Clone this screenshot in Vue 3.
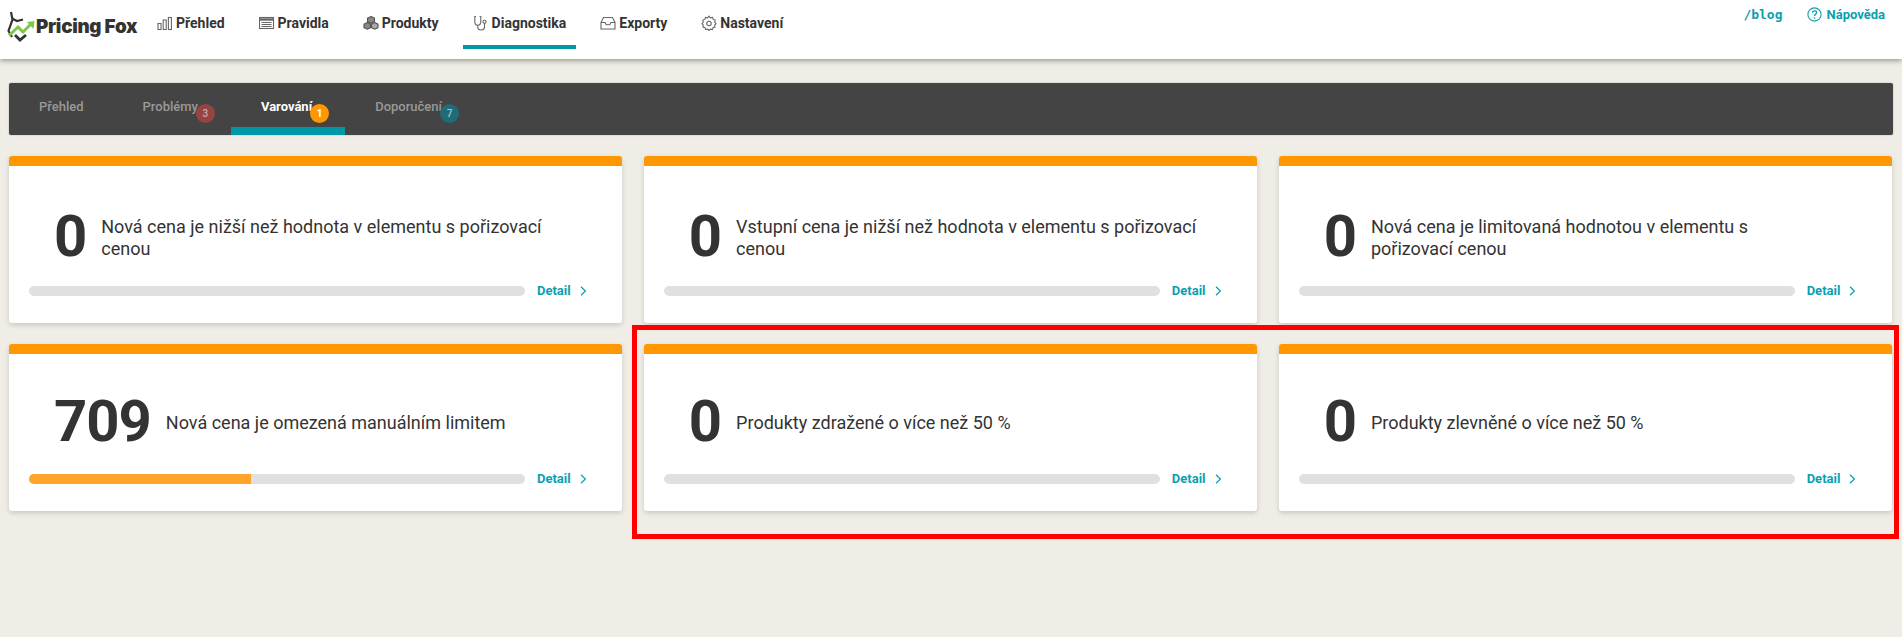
<script setup>
const navItems = [
  { label: "Přehled", icon: "bars" },
  { label: "Pravidla", icon: "table" },
  { label: "Produkty", icon: "cubes" },
  { label: "Diagnostika", icon: "stethoscope", active: true },
  { label: "Exporty", icon: "inbox" },
  { label: "Nastavení", icon: "gear" }
];

const tabs = [
  { label: "Přehled" },
  { label: "Problémy", badge: 3, tone: "red" },
  { label: "Varování", badge: 1, tone: "orange", active: true },
  { label: "Doporučení", badge: 7, tone: "teal" }
];

const cards = [
  { count: 0, text: "Nová cena je nižší než hodnota v elementu s pořizovací cenou", progress: 0, twoLine: true },
  { count: 0, text: "Vstupní cena je nižší než hodnota v elementu s pořizovací cenou", progress: 0, twoLine: true },
  { count: 0, text: "Nová cena je limitovaná hodnotou v elementu s pořizovací cenou", progress: 0, twoLine: true },
  { count: 709, text: "Nová cena je omezená manuálním limitem", progress: 44.7 },
  { count: 0, text: "Produkty zdražené o více než 50 %", progress: 0 },
  { count: 0, text: "Produkty zlevněné o více než 50 %", progress: 0 }
];
</script>

<template>
  <div class="page">
    <header class="topbar">
      <div class="logo">
        <svg class="logo-mark" width="29" height="31" viewBox="0 0 29 31" fill="none">
          <path d="M4 1 L5.5 8.5 L1.5 20 L5 26" stroke="#333" stroke-width="2.2" />
          <path d="M5 7.5 L10 10 L16 8.5" stroke="#333" stroke-width="2.2" />
          <path d="M8 24 L13 29 L19 24" stroke="#333" stroke-width="2.8" />
          <path d="M2 24.5 L11 16 L16 21 L24 13" stroke="#7ac943" stroke-width="3" />
          <path d="M20 11 L27.5 10 L26.5 18 Z" fill="#7ac943" />
        </svg>
        <span class="logo-text">Pricing Fox</span>
      </div>
      <nav class="nav">
        <a v-for="item in navItems" :key="item.label" class="nav-item" :class="[item.icon, { active: item.active }]">
          <svg class="nav-icon" width="16" height="16" viewBox="0 0 16 16" fill="none" stroke="#666" stroke-width="1.1">
            <template v-if="item.icon === 'bars'">
              <rect x="1" y="8.5" width="3" height="6" />
              <rect x="6.2" y="5" width="3" height="9.5" />
              <rect x="11.4" y="2.5" width="3" height="12" />
            </template>
            <template v-else-if="item.icon === 'table'">
              <rect x="0.5" y="2.5" width="14" height="11" />
              <path d="M0.5 4.5 H14.5" stroke-width="2.4" />
              <path d="M2.5 7.5 H12.5 M2.5 9.5 H12.5 M2.5 11.5 H12.5" stroke-width="1" />
            </template>
            <template v-else-if="item.icon === 'cubes'">
              <path d="M8 1.5 L11.5 3.2 V6.6 L8 8.2 L4.5 6.6 V3.2 Z" fill="#888" stroke="#555" />
              <path d="M4.3 7.6 L7.6 9.2 V12.6 L4.3 14.2 L1 12.6 V9.2 Z" fill="#888" stroke="#555" />
              <path d="M11.7 7.6 L15 9.2 V12.6 L11.7 14.2 L8.4 12.6 V9.2 Z" fill="#aaa" stroke="#555" />
            </template>
            <template v-else-if="item.icon === 'stethoscope'">
              <path d="M3 1.5 H1.8 V6.5 C1.8 9 3.2 10.2 4.8 10.2 C6.4 10.2 7.8 9 7.8 6.5 V1.5 H6.6" />
              <path d="M4.8 10.2 V12 C4.8 14 6 15 8 15 C10 15 11.5 14 11.5 12 V8.5" />
              <circle cx="11.5" cy="6.8" r="1.6" />
            </template>
            <template v-else-if="item.icon === 'inbox'">
              <path d="M1 7.5 L3.5 2.5 H12.5 L15 7.5 V14 H1 Z" />
              <path d="M1 7.5 H5 L6.2 9.8 H9.8 L11 7.5 H15" />
            </template>
            <template v-else>
              <path d="M8 1.2 L9.4 2.8 L11.5 2.4 L12.2 4.4 L14.2 5.1 L13.7 7.2 L15 8.7 L13.7 10.2 L14 12 L12 12.6 L11.3 14.6 L9.3 14.2 L8 15.6 L6.7 14.2 L4.7 14.6 L4 12.6 L2 12 L2.3 10.2 L1 8.7 L2.3 7.2 L1.8 5.1 L3.8 4.4 L4.5 2.4 L6.6 2.8 Z" />
              <circle cx="8" cy="8.5" r="2.2" />
            </template>
          </svg>
          {{ item.label }}
        </a>
      </nav>
      <div class="top-links">
        <a class="blog-link">/blog</a>
        <a class="help-link">
          <svg width="15" height="15" viewBox="0 0 15 15" fill="none" stroke="#0a9fb0" stroke-width="1.1">
            <circle cx="7.5" cy="7.5" r="6.6" />
            <path d="M5.5 5.8 C5.5 4.4 6.5 3.8 7.5 3.8 C8.7 3.8 9.6 4.5 9.6 5.6 C9.6 7.2 7.5 7.2 7.5 9" stroke-width="1.3" />
            <path d="M7.5 10.2 V11.6" stroke-width="1.4" />
          </svg>
          Nápověda
        </a>
      </div>
    </header>

    <main class="content">
      <div class="tabs">
        <a v-for="tab in tabs" :key="tab.label" class="tab" :class="{ active: tab.active, 'has-badge': tab.badge }">
          {{ tab.label }}
          <span v-if="tab.badge" class="badge" :class="tab.tone">{{ tab.badge }}</span>
        </a>
      </div>

      <div class="grid">
        <section v-for="(card, i) in cards" :key="i" class="card">
          <div class="card-main" :class="{ 'two-line': card.twoLine }">
            <span class="count">{{ card.count }}</span>
            <p class="desc">{{ card.text }}</p>
          </div>
          <div class="card-foot">
            <div class="track">
              <div class="fill" :style="{ width: card.progress + '%' }"></div>
            </div>
            <a class="detail">
              Detail
              <svg width="7" height="10" viewBox="0 0 7 10" fill="none" stroke="#0a9fb0" stroke-width="1.2">
                <path d="M1 0.8 L5.4 5 L1 9.2" />
              </svg>
            </a>
          </div>
        </section>
      </div>
    </main>

    <div class="highlight"></div>
  </div>
</template>

<style>
body {
  background: #f0ede6;
}
</style>

<style scoped>
.page {
  position: relative;
  height: 637px;
  overflow: hidden;
  background: #f0ede6;
  font-family: Roboto, "Liberation Sans", sans-serif;
  color: #333;
}
.topbar {
  display: flex;
  height: 59px;
  background: #fff;
  box-shadow: 0 2px 5px rgba(0, 0, 0, 0.35);
}
.logo {
  display: flex;
  align-items: center;
  width: 147px;
  padding: 0 0 7px 7px;
  box-sizing: border-box;
}
.logo-mark {
  flex: none;
}
.logo-text {
  font-family: Inter, sans-serif;
  font-weight: 900;
  font-size: 18.8px;
  letter-spacing: -0.3px;
  color: #333;
  white-space: nowrap;
}
.nav {
  display: flex;
  flex: 1;
}
.nav-item {
  display: flex;
  align-items: center;
  gap: 3px;
  height: 49px;
  box-sizing: border-box;
  padding: 0 10px 4px;
  margin-right: 14px;
  font-size: 14px;
  font-weight: 700;
  color: #333;
  white-space: nowrap;
}
.nav-item.active {
  border-bottom: 4px solid #0097a7;
  padding-bottom: 0;
}
.top-links {
  display: flex;
  gap: 24px;
  padding: 7px 17px 0 0;
  align-items: flex-start;
  line-height: 15px;
}
.blog-link {
  font-family: "DejaVu Sans Mono", monospace;
  font-size: 13px;
  font-weight: 700;
  color: #0a9fb0;
}
.help-link {
  display: flex;
  align-items: center;
  gap: 5px;
  font-size: 13px;
  font-weight: 700;
  color: #0a9fb0;
}
.content {
  padding: 24px 9px 0;
}
.tabs {
  display: flex;
  height: 52px;
  background: #444;
  border-radius: 2px;
  box-shadow: 0 0 2px rgba(0, 0, 0, 0.25);
}
.tab {
  position: relative;
  box-sizing: border-box;
  height: 52px;
  padding: 0 29px 0 30px;
  line-height: 48px;
  font-size: 13px;
  font-weight: 500;
  color: #999;
}
.tab.has-badge {
  padding-right: 33px;
}
.tab.active {
  color: #fff;
  font-weight: 700;
  border-bottom: 8px solid #0097a7;
}
.badge {
  position: absolute;
  top: 21px;
  right: 16px;
  width: 19px;
  height: 19px;
  border-radius: 50%;
  text-align: center;
  line-height: 19px;
  font-size: 10px;
  color: #fff;
}
.badge.red {
  background: #964443;
  color: #c9a8a8;
}
.badge.orange {
  background: #ff9800;
}
.badge.teal {
  background: #1f6c78;
  color: #a9c3c7;
}
.grid {
  display: grid;
  grid-template-columns: repeat(3, 1fr);
  gap: 21px 21.5px;
  margin: 21px 1px 0 0;
}
.card {
  height: 167px;
  box-sizing: border-box;
  padding: 13px 20px 0;
  background: #fff;
  border-top: 10px solid #ff9800;
  border-radius: 3px;
  box-shadow: 0 2px 5px rgba(0, 0, 0, 0.16);
}
.card-main {
  display: flex;
  align-items: center;
  gap: 15px;
  box-sizing: border-box;
  height: 107px;
  padding-left: 25px;
}
.card-main.two-line {
  padding-top: 7px;
}
.count {
  font-size: 58px;
  font-weight: 700;
  letter-spacing: -1px;
  line-height: 60px;
  color: #333;
}
.desc {
  margin: 4px 0 0;
  max-width: 463px;
  font-size: 18px;
  font-weight: 400;
  line-height: 22px;
  color: #333;
}
.card-foot {
  display: flex;
  align-items: center;
  height: 10px;
}
.track {
  width: 496px;
  height: 10px;
  overflow: hidden;
  background: #e0e0e0;
  border-radius: 5px;
}
.fill {
  height: 100%;
  background: #ffa52c;
}
.detail {
  display: flex;
  align-items: center;
  gap: 9px;
  margin: -1px 0 0 12px;
  font-size: 13px;
  font-weight: 700;
  color: #0a9fb0;
}
.highlight {
  position: absolute;
  left: 632px;
  top: 325px;
  width: 1267px;
  height: 214px;
  box-sizing: border-box;
  border: 5px solid #ff0000;
}
</style>
